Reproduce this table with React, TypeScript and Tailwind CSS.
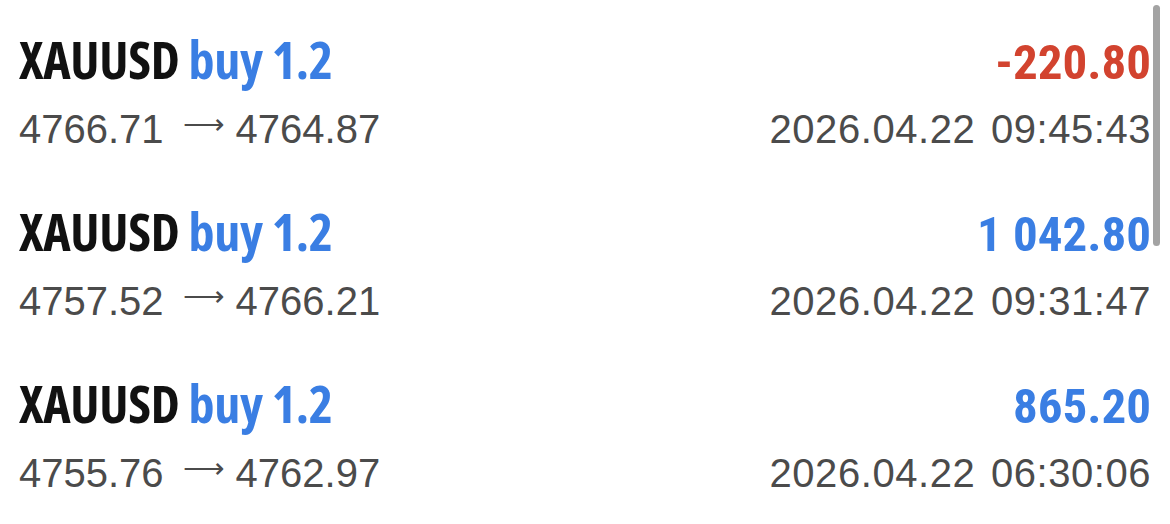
const rows = [
  { from: "4766.71", to: "4764.87", profit: "-220.80", neg: true, time: "2026.04.22 09:45:43" },
  { from: "4757.52", to: "4766.21", profit: "1 042.80", neg: false, time: "2026.04.22 09:31:47" },
  { from: "4755.76", to: "4762.97", profit: "865.20", neg: false, time: "2026.04.22 06:30:06" },
];

export default function App() {
  return (
    <div className="relative w-[1170px] h-[524px] bg-white overflow-hidden">
      <div className="flex flex-col gap-[48px] pt-[29px] pl-[19px] pr-[19px]">
        {rows.map((r, i) => (
          <div key={i} className="flex flex-col gap-[12px]">
            <div className="flex items-baseline justify-between">
              <div className="font-bold text-[52px] leading-[60px] text-[#111111] font-['Open_Sans',sans-serif] [font-stretch:75%] tracking-[-0.3px]">
                XAUUSD <span className="text-[#3a7ee3]">buy 1.2</span>
              </div>
              <div
                className={`font-bold text-[49px] leading-[60px] font-['Roboto',sans-serif] [font-stretch:75%] ${
                  r.neg ? "text-[#d2432f]" : "text-[#3a7ee3]"
                }`}
              >
                {r.profit}
              </div>
            </div>
            <div className="flex items-baseline justify-between text-[40px] leading-[48px] text-[#4b4b4b] font-['Liberation_Sans',Arial,sans-serif]">
              <div className="flex items-baseline">
                <span>{r.from}</span>
                <span className="ml-[19px] mr-[12px] inline-block w-[41px] text-[29px] leading-none font-['DejaVu_Sans',sans-serif] font-extralight relative top-[-9px]">⟶</span>
                <span>{r.to}</span>
              </div>
              <div className="tracking-[0.55px] [word-spacing:4px]">{r.time}</div>
            </div>
          </div>
        ))}
      </div>
      <div className="absolute left-[1153px] top-[5px] w-[7px] h-[241px] rounded-full bg-[#a3a3a3]" />
    </div>
  );
}
